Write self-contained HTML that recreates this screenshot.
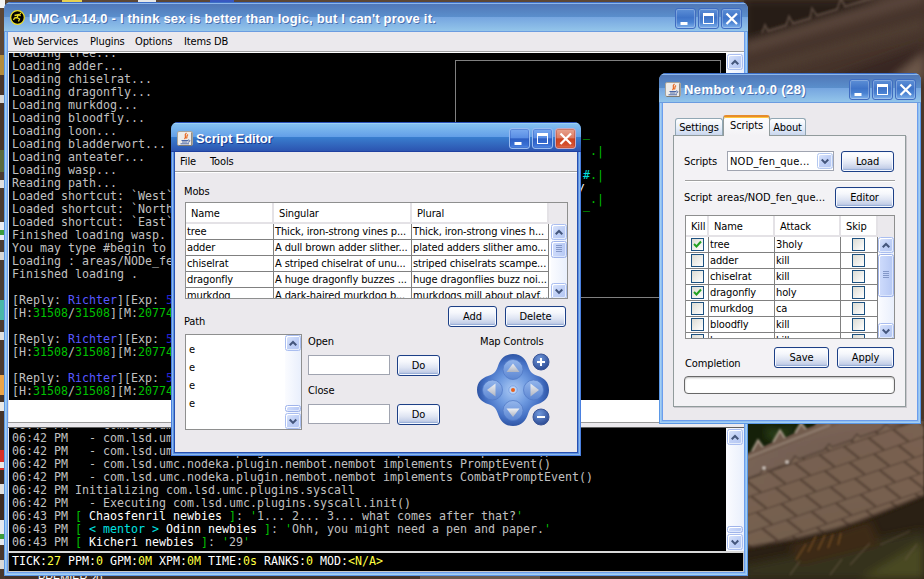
<!DOCTYPE html><html><head><meta charset="utf-8"><title>UMC</title><style>
*{box-sizing:border-box;margin:0;padding:0}
html,body{width:924px;height:579px;overflow:hidden;background:#4a3a30}
body{position:relative;font-family:"DejaVu Sans Condensed","Liberation Sans",sans-serif;font-size:11px;color:#000;line-height:13px;letter-spacing:-0.12px}
.abs{position:absolute}
.mono{font-family:"DejaVu Sans Mono","Liberation Mono",monospace;font-size:11.63px;line-height:13px;white-space:pre;color:#c0c0c0;letter-spacing:0}
.con{position:absolute;background:#000;overflow:hidden}
.con div{position:absolute;left:0;height:13px}
.g{color:#00c000}.b{color:#5858ff}.db{color:#2424d0}.w{color:#fff}.c{color:#00e0e0}.y{color:#ffff40}
/* windows */
.win{position:absolute;border-radius:7px 7px 0 0;overflow:hidden}
.win.in{background:#8fc0f0}
.win.in .fr{box-shadow:inset 0 0 0 1px #5b98e6,inset 0 0 0 2px #a4cdf3,inset 0 0 0 3px #8fc0f0,inset 0 0 0 4px #6c9ded}
.win.ac{background:#5a90e0}
.win.ac .fr{box-shadow:inset 0 0 0 1px #4a80e0,inset 0 0 0 2px #8cb8ec,inset 0 0 0 3px #5a90e0,inset 0 0 0 4px #2850b0}
.fr{position:absolute;left:0;right:0;top:26px;bottom:0}
.tb{position:absolute;left:0;right:0;top:0;height:30px}
.in .tb{background:linear-gradient(#3d6fc8 0,#3d6fc8 1px,#8cb6ea 1px,#8cb6ea 2px,#5077b7 2px,#5b90cd 15.5px,#76a6e0 15.5px,#93c5ea 29px,#6b9ce0 29px)}
.ac .tb{background:linear-gradient(#2850b8 0,#2850b8 1px,#9cd0f4 1px,#9cd0f4 2px,#84c0f0 2px,#64a0e8 14.5px,#3a80d0 14.5px,#2c54b0 29px,#1f40a0 29px)}
.tt{position:absolute;top:9px;color:#fff;font-family:"Liberation Sans",sans-serif;font-weight:bold;font-size:13px;line-height:16px;white-space:pre}
.ac .tt{text-shadow:1px 1px 0 #1a3a90}
.in .tt{text-shadow:1px 1px 0 #4a70b0}
.cb{position:absolute;top:6px;width:21px;height:21px;border-radius:3px;border:1px solid #3f6cc0}
.in .cb{background:linear-gradient(#5d8fd6,#3f74c8 45%,#4a82d2 70%,#7fb0ea);box-shadow:inset 0 0 0 1px rgba(255,255,255,.25)}
.ac .cb{background:linear-gradient(#7aaaf0 0,#5a8ee4 46%,#2d5fc4 52%,#3a70d4 85%,#5a90e8 100%);border-color:#9abcf0;box-shadow:inset 0 0 0 1px rgba(40,80,180,.35)}
.ac .cb.x{background:linear-gradient(#e8a490 0,#dc7c64 46%,#cc4420 52%,#d45030 85%,#e87858 100%);border-color:#c8a8c0;box-shadow:inset 0 0 0 1px rgba(160,50,30,.35)}
.cb svg{position:absolute;left:0;top:0}
.body{position:absolute;background:#ebe9ed}
.menu{position:absolute;left:0;right:0;top:0;height:19px;background:#ebe9ed}
.menu span{position:absolute;top:3px;white-space:pre}
.lbl{position:absolute;white-space:pre;line-height:13px}
/* buttons */
.btn{position:absolute;height:21px;border:1px solid #1c3f86;border-radius:3px;background:linear-gradient(#ffffff 0,#f5f7fc 30%,#dfe5f3 60%,#c4cfe8 85%,#aebcde 100%);box-shadow:inset 0 0 0 1px #f6f9ff, inset 0 -2px 1px #98aed8;text-align:center;line-height:19px;white-space:pre}
/* scrollbars */
.sb{position:absolute;background:linear-gradient(90deg,#fbfcff,#e9effc)}
.sbb{position:absolute;border:1px solid #aabef0;border-radius:2.5px;background:linear-gradient(135deg,#dce6fc,#c0d0f6 50%,#b4c6f2);box-shadow:inset 1px 1px 0 #fff,inset -1px -1px 0 #e4ecfc}
.sbb svg{position:absolute;left:0;top:0}
.sbt{position:absolute;border:1px solid #a0b4ea;border-radius:2.5px;background:linear-gradient(90deg,#cfdcfc,#b6c8f4);box-shadow:inset 1px 1px 0 #fff,inset -1px -1px 0 #dce6fc}
/* tables */
.tbl{position:absolute;background:#fff;border:1px solid #8e8f8f;overflow:hidden}
.th{position:absolute;top:0;height:21px;background:#fff;border-right:2px solid #e4e2e6;border-bottom:2px solid #e4e2e6;line-height:21px;padding-left:5px;white-space:pre}
.tr{position:absolute;left:0;height:16px}
.td{position:absolute;top:0;height:16px;border-right:1px solid #808080;border-bottom:1px solid #808080;line-height:16px;padding-left:1px;white-space:pre;overflow:hidden}
.chk{position:absolute;width:13px;height:13px;border:1px solid #1c5180;background:linear-gradient(135deg,#dcdcd4,#fff)}
.chk svg{position:absolute;left:0;top:0}
.fld{position:absolute;background:#fff;border:1px solid #a0a4b0}
</style></head><body>
<svg class="abs" style="left:0;top:0" width="924" height="579" viewBox="0 0 924 579">
<defs>
<linearGradient id="tail" x1="0" y1="0" x2="0.25" y2="1"><stop offset="0" stop-color="#8a7464"/><stop offset="0.25" stop-color="#705a4c"/><stop offset="0.7" stop-color="#66503f"/><stop offset="1" stop-color="#4a3a2a"/></linearGradient>
<linearGradient id="tr" x1="0" y1="0" x2="1" y2="0"><stop offset="0" stop-color="#000" stop-opacity="0"/><stop offset="1" stop-color="#8a4a30" stop-opacity=".3"/></linearGradient>
<pattern id="sc" width="26" height="17" patternUnits="userSpaceOnUse" patternTransform="translate(744 480) rotate(-19)"><rect width="26" height="17" fill="#86705f" opacity=".35"/><path d="M0 0H26M1 0L12 17M14 -17L26 0" stroke="#3a2a20" stroke-width="2.200" fill="none" opacity=".6"/></pattern>
<filter id="bl" x="-5%" y="-5%" width="110%" height="110%"><feGaussianBlur stdDeviation="1.2"/></filter>
<filter id="bl3" x="-10%" y="-10%" width="120%" height="120%"><feGaussianBlur stdDeviation="4"/></filter>
</defs>
<rect width="924" height="579" fill="#4a362a"/>
<!-- left strip icons -->
<g>
<rect x="0" y="0" width="5" height="8" fill="#f4f4f4"/><rect x="0" y="8" width="5" height="47" fill="#5c4636"/><rect x="0" y="55" width="5" height="20" fill="#b48c3c"/>
<rect x="0" y="75" width="5" height="75" fill="#49352a"/><rect x="0" y="95" width="4" height="8" fill="#d8d8d8"/><rect x="0" y="150" width="5" height="22" fill="#5a6a3c"/>
<rect x="0" y="172" width="5" height="50" fill="#4a3a30"/><rect x="0" y="180" width="4" height="8" fill="#e0e0e0"/><rect x="0" y="222" width="5" height="18" fill="#e8ecf4"/><rect x="0" y="230" width="5" height="5" fill="#3c9c3c"/>
<rect x="0" y="240" width="5" height="60" fill="#4a3c34"/><rect x="0" y="252" width="4" height="8" fill="#d8d8d8"/><rect x="0" y="300" width="5" height="20" fill="#48b8a8"/>
<rect x="0" y="320" width="5" height="55" fill="#4c3a30"/><rect x="0" y="332" width="4" height="8" fill="#e0e0e0"/><rect x="0" y="375" width="5" height="20" fill="#eca448"/>
<rect x="0" y="395" width="5" height="55" fill="#46342a"/><rect x="0" y="402" width="4" height="9" fill="#e8e8e8"/><rect x="0" y="450" width="5" height="20" fill="#d83028"/><rect x="0" y="462" width="5" height="6" fill="#e8e8e8"/>
<rect x="0" y="470" width="5" height="50" fill="#3c2a22"/><rect x="0" y="484" width="4" height="10" fill="#e0e0e0"/><rect x="0" y="520" width="5" height="25" fill="#e4e8f0"/><rect x="0" y="534" width="5" height="5" fill="#3c9c3c"/>
<rect x="0" y="545" width="5" height="34" fill="#48362c"/><rect x="0" y="560" width="4" height="9" fill="#d8d8d8"/>
</g>
<!-- top strip -->
<rect x="5" y="0" width="739" height="3" fill="#5c4634"/><rect x="744" y="0" width="180" height="3" fill="#2c1e18"/><rect x="62" y="0" width="20" height="2" fill="#e8d050"/><rect x="138" y="0" width="18" height="2" fill="#e8e8e8"/><rect x="210" y="0" width="24" height="2" fill="#3858c0"/>
<!-- top right dragon wing -->
<g>
<rect x="744" y="0" width="180" height="80" fill="#46342b"/>
<g filter="url(#bl3)">
<path d="M744 0H884L744 44Z" fill="#281b16"/>
<path d="M744 42L924 -12V2L744 54Z" fill="#58443a"/>
<path d="M744 70L924 18V30L744 80Z" fill="#503d33"/>
<path d="M820 80L924 44V80Z" fill="#382821"/>
<path d="M890 80L924 52V80Z" fill="#6c5648"/>
</g>
<path d="M762 33l3-8 3 6 18-5.500 3-9 4 7 17-5 2-10 5 7 20-6 4-11 4 8 30-9" stroke="#7a665a" stroke-width="2" fill="none" opacity=".55" filter="url(#bl)"/>
</g>
<!-- bottom right: tail -->
<g>
<rect x="744" y="420" width="180" height="159" fill="#2a2014"/>
<g filter="url(#bl3)">
<path d="M744 565L924 530V579H744Z" fill="#35301a"/>
<path d="M860 579L924 540V579Z" fill="#4a4a24"/>
<path d="M790 545L870 520L880 545L800 565Z" fill="#3c2a18"/>
</g>
<path d="M744 420H826L744 455Z" fill="#152009"/>
<path d="M765 428l18 3 12-7-8 12-18 4Z" fill="#2e441a" filter="url(#bl3)"/>
<g filter="url(#bl)">
<path d="M744 455 L752 451 L758 440 L763 447 L773 442 L780 430 L785 438 L795 433 L801 423 L806 429 L814 426 L819 420 L924 420 L924 496 L914 500 L887 511 L859 522 L835 530 L799 539 L744 549Z" fill="url(#tail)"/>
<path d="M744 455 L752 451 L758 440 L763 447 L773 442 L780 430 L785 438 L795 433 L801 423 L806 429 L814 426 L819 420 L924 420 L924 496 L914 500 L887 511 L859 522 L835 530 L799 539 L744 549Z" fill="url(#tr)"/>
<path d="M752 451L758 440L763 447M773 442L780 430L785 438M795 433L801 423L806 429" stroke="#c4b4a4" stroke-width="1.600" fill="none" opacity=".8"/><path d="M744 459L830 425" stroke="#b4a496" stroke-width="2.500" opacity=".45"/>
<path d="M744 462L840 424H900L744 482Z" fill="#8a7668" opacity=".4"/>
<path d="M744 480 L760 474 L764 468 L768 471 L790 463 L795 456 L799 459 L824 450 L829 444 L832 447 L852 440 L857 434 L860 437 L880 430 L886 424 L890 427 L924 420 L924 496 L914 500 L887 511 L859 522 L835 530 L799 539 L744 549Z" fill="#725c4c" opacity=".75"/>
<path d="M744 480 L760 474 L764 468 L768 471 L790 463 L795 456 L799 459 L824 450 L829 444 L832 447 L852 440 L857 434 L860 437 L880 430 L886 424 L890 427 L924 420 L924 496 L914 500 L887 511 L859 522 L835 530 L799 539 L744 549Z" fill="url(#sc)"/>
<path d="M744 480 L760 474 L764 468 L768 471 L790 463 L795 456 L799 459 L824 450 L829 444 L832 447 L852 440 L857 434 L860 437 L880 430 L886 424 L890 427 L924 420" stroke="#3e2e26" stroke-width="1.500" fill="none" opacity=".6"/>
<path d="M744 549L799 539L835 530L859 522L887 511L914 500L924 496" stroke="#33261c" stroke-width="5" fill="none" opacity=".5"/>
<circle cx="764" cy="468" r="1.500" fill="#e8e0d8"/><circle cx="787" cy="462" r="1.500" fill="#e8e0d8"/>
</g>
<g stroke="#8a5a28" stroke-width="1.400" opacity=".75" filter="url(#bl)"><path d="M808 552l8-16M818 550l7-15M828 548l5-14M838 545l3-12M796 560l10-16"/></g>
<g stroke="#6a5a48" stroke-width="1.300" opacity=".6" filter="url(#bl)"><path d="M850 565l20-22M880 545l30-14M790 575l10-14M905 560l12-16M830 575l12-16"/></g>
</g>
<!-- bottom strip -->
<rect x="5" y="575" width="743" height="4" fill="#42302a"/>
<rect x="420" y="575" width="120" height="4" fill="#6a5a50"/>
<text x="38" y="582" font-family="Liberation Sans, sans-serif" font-size="11" fill="#fff">PREMIER 20</text>
</svg>
<div class="win in" style="left:4px;top:2px;width:744px;height:574px">
<div class="fr"></div><div class="tb"></div>
<svg class="abs" style="left:6px;top:8px" width="16" height="16" viewBox="0 0 16 16"><circle cx="7.500" cy="7.500" r="6.800" fill="#000" stroke="#f0e020" stroke-width="1.200"/><path d="M4.500 5.500L9 4.500L10.500 6M8.500 5L7 7.500L9.500 9L8.500 11.500M7 7.500L4.500 8L3.500 10M10 4L11 3" stroke="#f0e020" stroke-width="1.300" fill="none"/></svg>
<div class="tt" style="left:25px;letter-spacing:.2px">UMC v1.14.0 - I think sex is better than logic, but I can't prove it.</div>
<div class="cb min" style="left:671px"><svg width="19" height="19" viewBox="0 0 19 19"><rect x="4.5" y="13" width="7" height="3" fill="#fff"/></svg></div><div class="cb max" style="left:694px"><svg width="19" height="19" viewBox="0 0 19 19"><rect x="4.5" y="5.5" width="10" height="9" fill="none" stroke="#fff" stroke-width="1"/><rect x="4" y="4" width="11" height="3" fill="#fff"/></svg></div><div class="cb x" style="left:717px"><svg width="19" height="19" viewBox="0 0 19 19"><path d="M4.5 4.500L15 15M15 4.500L4.5 15" stroke="#fff" stroke-width="2.200" fill="none"/></svg></div>
<div class="body" style="left:4px;top:30px;width:736px;height:540px">
<div class="menu">
<span style="left:5px">Web Services</span>
<span style="left:82px">Plugins</span>
<span style="left:127px">Options</span>
<span style="left:176px">Items DB</span>
</div>
<div class="abs" style="left:0;top:19px;width:736px;height:1px;background:#a0a0a0"></div>
<div class="abs" style="left:0;top:20px;width:736px;height:1px;background:#fff"></div>
<div class="con mono" style="left:1px;top:21px;width:717px;height:347px">
<div style="top:-6px;left:3px">Loading tree...</div>
<div style="top:7px;left:3px">Loading adder...</div>
<div style="top:20px;left:3px">Loading chiselrat...</div>
<div style="top:33px;left:3px">Loading dragonfly...</div>
<div style="top:46px;left:3px">Loading murkdog...</div>
<div style="top:59px;left:3px">Loading bloodfly...</div>
<div style="top:72px;left:3px">Loading loon...</div>
<div style="top:85px;left:3px">Loading bladderwort...</div>
<div style="top:98px;left:3px">Loading anteater...</div>
<div style="top:111px;left:3px">Loading wasp...</div>
<div style="top:124px;left:3px">Reading path...</div>
<div style="top:137px;left:3px">Loaded shortcut: `West`</div>
<div style="top:150px;left:3px">Loaded shortcut: `North`</div>
<div style="top:163px;left:3px">Loaded shortcut: `East`</div>
<div style="top:176px;left:3px">Finished loading wasp.</div>
<div style="top:189px;left:3px">You may type #begin to start</div>
<div style="top:202px;left:3px">Loading : areas/NODe_fen</div>
<div style="top:215px;left:3px">Finished loading .</div>
<div style="top:241px;left:3px">[Reply: <span class="b">Richter</span>][Exp: <span class="db">5</span></div>
<div style="top:254px;left:3px">[H:<span class="g">31508</span>/<span class="g">31508</span>][M:<span class="g">20774</span></div>
<div style="top:280px;left:3px">[Reply: <span class="b">Richter</span>][Exp: <span class="db">5</span></div>
<div style="top:293px;left:3px">[H:<span class="g">31508</span>/<span class="g">31508</span>][M:<span class="g">20774</span></div>
<div style="top:319px;left:3px">[Reply: <span class="b">Richter</span>][Exp: <span class="db">5</span></div>
<div style="top:332px;left:3px">[H:<span class="g">31508</span>/<span class="g">31508</span>][M:<span class="g">20774</span></div>
<div class="abs" style="left:446px;top:7px;width:266px;height:238px;border:1px solid #808080;height:238px"></div>
<div class="g" style="left:574px;top:74px">_</div>
<div class="g" style="left:581px;top:92px">.|</div>
<div class="c" style="left:574px;top:116px">#</div>
<div class="g" style="left:581px;top:116px">.|</div>
<div class="w" style="left:569px;top:130px">/</div>
<div class="g" style="left:581px;top:140px">.|</div>
<div class="g" style="left:574px;top:146px">_</div>
</div>
<div class="sb" style="left:718px;top:21px;width:18px;height:347px"><div class="sbb" style="top:1px;left:1px;width:16px;height:16px"><svg width="14" height="14" viewBox="0 0 15 15"><path d="M4 10L7.5 6.5L11 10" stroke="#44567c" stroke-width="2.2" fill="none"/></svg></div><div class="sbb" style="top:330px;left:1px;width:16px;height:16px"><svg width="14" height="14" viewBox="0 0 15 15"><path d="M4 6L7.5 9.5L11 6" stroke="#44567c" stroke-width="2.2" fill="none"/></svg></div></div>
<div class="abs" style="left:1px;top:368px;width:735px;height:22px;background:#fff"></div>
<div class="abs" style="left:0px;top:390px;width:736px;height:1px;background:#9a9a9a"></div>
<div class="abs" style="left:0px;top:395px;width:736px;height:1px;background:#606060"></div>
<div class="con mono" style="left:1px;top:396px;width:717px;height:123px">
<div style="top:-9px;left:3px">06:42 PM   - com.lsd.umc.nodeka.plugin.nembot.nembot implements ConnectEvent()</div>
<div style="top:4px;left:3px">06:42 PM   - com.lsd.umc.nodeka.plugin.nembot.nembot implements InputEvent()</div>
<div style="top:17px;left:3px">06:42 PM   - com.lsd.umc.nodeka.plugin.nembot.nembot implements OutputEvent()</div>
<div style="top:30px;left:3px">06:42 PM   - com.lsd.umc.nodeka.plugin.nembot.nembot implements PromptEvent()</div>
<div style="top:43px;left:3px">06:42 PM   - com.lsd.umc.nodeka.plugin.nembot.nembot implements CombatPromptEvent()</div>
<div style="top:56px;left:3px">06:42 PM Initializing com.lsd.umc.plugins.syscall</div>
<div style="top:69px;left:3px">06:42 PM   - Executing com.lsd.umc.plugins.syscall.init()</div>
<div style="top:82px;left:3px">06:43 PM <span class="g">[</span><span class="w"> Chaosfenril newbies </span><span class="g">]</span>: <span class="g">'</span>1... 2... 3... what comes after that?<span class="g">'</span></div>
<div style="top:95px;left:3px">06:43 PM <span class="g">[</span><span class="c"> &lt; mentor &gt;</span><span class="w"> Odinn newbies </span><span class="g">]</span>: <span class="g">'</span>Ohh, you might need a pen and paper.<span class="g">'</span></div>
<div style="top:108px;left:3px">06:43 PM <span class="g">[</span><span class="w"> Kicheri newbies </span><span class="g">]</span>: <span class="g">'</span>29<span class="g">'</span></div>
</div>
<div class="sb" style="left:718px;top:396px;width:18px;height:123px"><div class="sbb" style="top:1px;left:1px;width:16px;height:16px"><svg width="14" height="14" viewBox="0 0 15 15"><path d="M4 10L7.5 6.5L11 10" stroke="#44567c" stroke-width="2.2" fill="none"/></svg></div><div class="sbt" style="top:98px;left:1px;height:7px;width:16px"></div><div class="sbb" style="top:106px;left:1px;width:16px;height:16px"><svg width="14" height="14" viewBox="0 0 15 15"><path d="M4 6L7.5 9.5L11 6" stroke="#44567c" stroke-width="2.2" fill="none"/></svg></div></div>
<div class="abs" style="left:0;top:519px;width:736px;height:2px;background:#d8d8d8"></div>
<div class="con mono" style="left:0px;top:521px;width:736px;height:19px;border-left:1px solid #a0a0a0;border-right:1px solid #c0c0c0;border-bottom:1px solid #c8c8c8">
<div style="top:2px;left:3px"><span class="w">TICK:</span><span class="y">27</span><span class="w"> PPM:</span><span class="y">0</span><span class="w"> GPM:</span><span class="y">0M</span><span class="w"> XPM:</span><span class="y">0M</span><span class="w"> TIME:</span><span class="y">0s</span><span class="w"> RANKS:</span><span class="y">0</span><span class="w"> MOD:</span><span class="y">&lt;N/A&gt;</span></div>
</div>
</div>
</div>
<div class="win ac" style="left:171px;top:122px;width:410px;height:334px">
<div class="fr"></div><div class="tb"></div>
<svg class="abs" style="left:6px;top:9px" width="16" height="15" viewBox="0 0 16 15"><rect x=".5" y=".5" width="15" height="14" rx="1.5" fill="#efece8" stroke="#a8a49c"/><path d="M1.500 14.500H14.500V1.500" stroke="#6c6860" stroke-width="1" fill="none" opacity=".7"/><path d="M9.500 2C6 4.500 10.500 5 7.500 8M11 3.500C9 5 10.500 6 9.500 7.500" stroke="#e8651c" stroke-width="1.200" fill="none"/><path d="M4.500 9.500H11M5 11H10.500M3.500 12.800H12" stroke="#4a68a8" stroke-width="1"/><path d="M11 9c2.500-.5 2.500 2 0 2.200" stroke="#4a68a8" stroke-width="1" fill="none"/></svg>
<div class="tt" style="left:25px">Script Editor</div>
<div class="cb min" style="left:338px"><svg width="19" height="19" viewBox="0 0 19 19"><rect x="4.5" y="13" width="7" height="3" fill="#fff"/></svg></div><div class="cb max" style="left:361px"><svg width="19" height="19" viewBox="0 0 19 19"><rect x="4.5" y="5.5" width="10" height="9" fill="none" stroke="#fff" stroke-width="1"/><rect x="4" y="4" width="11" height="3" fill="#fff"/></svg></div><div class="cb x" style="left:384px"><svg width="19" height="19" viewBox="0 0 19 19"><path d="M4.5 4.500L15 15M15 4.500L4.5 15" stroke="#fff" stroke-width="2.200" fill="none"/></svg></div>
<div class="body" style="left:4px;top:30px;width:402px;height:300px">
<div class="menu"><span style="left:5px">File</span><span style="left:35px">Tools</span></div>
<div class="abs" style="left:0;top:19px;width:402px;height:1px;background:#a0a0a0"></div>
<div class="abs" style="left:0;top:20px;width:402px;height:1px;background:#fff"></div>
<div class="lbl" style="left:9px;top:33px;">Mobs</div>
<div class="tbl" style="left:10px;top:50px;width:383px;height:97px">
<div class="th" style="left:0px;width:88px">Name</div>
<div class="th" style="left:88px;width:138px">Singular</div>
<div class="th" style="left:226px;width:137px">Plural</div>
<div class="abs" style="left:363px;top:0;width:20px;height:21px;background:#ebe9ed"></div>
<div class="tr" style="top:21px">
<div class="td" style="left:0px;width:88px">tree</div>
<div class="td" style="left:88px;width:138px">Thick, iron-strong vines p...</div>
<div class="td" style="left:226px;width:137px">Thick, iron-strong vines h...</div>
</div>
<div class="tr" style="top:37px">
<div class="td" style="left:0px;width:88px">adder</div>
<div class="td" style="left:88px;width:138px">A dull brown adder slither...</div>
<div class="td" style="left:226px;width:137px">plated adders slither amo...</div>
</div>
<div class="tr" style="top:53px">
<div class="td" style="left:0px;width:88px">chiselrat</div>
<div class="td" style="left:88px;width:138px">A striped chiselrat of unu...</div>
<div class="td" style="left:226px;width:137px">striped chiselrats scampe...</div>
</div>
<div class="tr" style="top:69px">
<div class="td" style="left:0px;width:88px">dragonfly</div>
<div class="td" style="left:88px;width:138px">A huge dragonfly buzzes ...</div>
<div class="td" style="left:226px;width:137px">huge dragonflies buzz noi...</div>
</div>
<div class="tr" style="top:85px">
<div class="td" style="left:0px;width:88px">murkdog</div>
<div class="td" style="left:88px;width:138px">A dark-haired murkdog b...</div>
<div class="td" style="left:226px;width:137px">murkdogs mill about playf...</div>
</div>
<div class="sb" style="left:365px;top:21px;width:16px;height:75px"><div class="sbb" style="top:0px;left:0px;width:16px;height:16px"><svg width="14" height="14" viewBox="0 0 15 15"><path d="M4 10L7.5 6.5L11 10" stroke="#44567c" stroke-width="2.2" fill="none"/></svg></div><div class="sbt" style="top:17px;left:0px;height:17px;width:16px"><i style="position:absolute;left:4px;top:3px;width:6px;height:1px;background:#8498c8"></i><i style="position:absolute;left:4px;top:5px;width:6px;height:1px;background:#8498c8"></i><i style="position:absolute;left:4px;top:7px;width:6px;height:1px;background:#8498c8"></i><i style="position:absolute;left:4px;top:9px;width:6px;height:1px;background:#8498c8"></i></div><div class="sbb" style="top:59px;left:0px;width:16px;height:16px"><svg width="14" height="14" viewBox="0 0 15 15"><path d="M4 6L7.5 9.5L11 6" stroke="#44567c" stroke-width="2.2" fill="none"/></svg></div></div>
</div>
<div class="btn" style="left:273px;top:154px;width:49px">Add</div>
<div class="btn" style="left:330px;top:154px;width:61px">Delete</div>
<div class="lbl" style="left:9px;top:163px;">Path</div>
<div class="tbl" style="left:10px;top:182px;width:117px;height:96px;border-color:#8e8f8f">
<div class="lbl" style="left:3px;top:8px">e</div>
<div class="lbl" style="left:3px;top:26px">e</div>
<div class="lbl" style="left:3px;top:44px">e</div>
<div class="lbl" style="left:3px;top:62px">e</div>
<div class="sb" style="left:99px;top:0px;width:16px;height:94px"><div class="sbb" style="top:0px;left:0px;width:16px;height:16px"><svg width="14" height="14" viewBox="0 0 15 15"><path d="M4 10L7.5 6.5L11 10" stroke="#44567c" stroke-width="2.2" fill="none"/></svg></div><div class="sbt" style="top:70px;left:0px;height:7px;width:16px"></div><div class="sbb" style="top:78px;left:0px;width:16px;height:16px"><svg width="14" height="14" viewBox="0 0 15 15"><path d="M4 6L7.5 9.5L11 6" stroke="#44567c" stroke-width="2.2" fill="none"/></svg></div></div>
</div>
<div class="lbl" style="left:133px;top:183px;">Open</div>
<div class="fld" style="left:133px;top:203px;width:82px;height:20px"></div>
<div class="btn" style="left:222px;top:203px;width:43px">Do</div>
<div class="lbl" style="left:133px;top:232px;">Close</div>
<div class="fld" style="left:133px;top:252px;width:82px;height:20px"></div>
<div class="btn" style="left:222px;top:252px;width:43px">Do</div>
<div class="lbl" style="left:305px;top:183px;">Map Controls</div>
<svg class="abs" style="left:301px;top:200px" width="76" height="76" viewBox="0 0 76 76">
<defs><radialGradient id="mc" cx=".5" cy=".5" r=".5"><stop offset="0" stop-color="#accaf4"/><stop offset=".45" stop-color="#6e9ae0"/><stop offset=".8" stop-color="#4470c4"/><stop offset="1" stop-color="#2f55a4"/></radialGradient>
<radialGradient id="pb" cx=".4" cy=".3" r=".75"><stop offset="0" stop-color="#7098dc"/><stop offset="1" stop-color="#28468f"/></radialGradient>
<linearGradient id="ic" x1="0" y1="0" x2="0" y2="1"><stop offset="0" stop-color="#94b6ec"/><stop offset="1" stop-color="#5c86d2"/></linearGradient>
<linearGradient id="ar" x1="0" y1="0" x2="0" y2="1"><stop offset="0" stop-color="#eef0f4"/><stop offset="1" stop-color="#aeb4c2"/></linearGradient></defs>
<path d="M37 2 C46 2 50 8 52 14 C54 20 56 22 62 24 C68 26 73 30 73 38 C73 46 68 50 62 52 C56 54 54 56 52 62 C50 68 46 74 37 74 C28 74 24 68 22 62 C20 56 18 54 12 52 C6 50 1 46 1 38 C1 30 6 26 12 24 C18 22 20 20 22 14 C24 8 28 2 37 2Z" fill="url(#mc)"/>
<g fill="url(#ic)" stroke="#5078c4" stroke-width="1" stroke-opacity=".7"><circle cx="37" cy="17.500" r="10"/><circle cx="37" cy="58.500" r="10"/><circle cx="16.500" cy="38" r="10"/><circle cx="57.500" cy="38" r="10"/></g>
<g fill="url(#ar)"><path d="M37 11.500L43.500 20H30.500Z"/><path d="M37 65L43.500 56.500H30.500Z"/><path d="M11 38L19.500 31.500V44.500Z"/><path d="M63 38L54.500 31.500V44.500Z"/></g>
<circle cx="37" cy="38" r="4.200" fill="#bcd4f6" stroke="#7ca2e4"/><circle cx="37" cy="38" r="2" fill="#e8601c"/>
<circle cx="65" cy="10" r="8" fill="url(#pb)" stroke="#3a5698"/><path d="M61 10H69M65 6V14" stroke="#fff" stroke-width="2"/>
<circle cx="65" cy="65" r="8" fill="url(#pb)" stroke="#3a5698"/><path d="M61 65H69" stroke="#fff" stroke-width="2"/>
</svg>
</div></div>
<div class="win in" style="left:659px;top:73px;width:262px;height:351px">
<div class="fr"></div><div class="tb"></div>
<svg class="abs" style="left:6px;top:9px" width="16" height="15" viewBox="0 0 16 15"><rect x=".5" y=".5" width="15" height="14" rx="1.5" fill="#efece8" stroke="#a8a49c"/><path d="M1.500 14.500H14.500V1.500" stroke="#6c6860" stroke-width="1" fill="none" opacity=".7"/><path d="M9.500 2C6 4.500 10.500 5 7.500 8M11 3.500C9 5 10.500 6 9.500 7.500" stroke="#e8651c" stroke-width="1.200" fill="none"/><path d="M4.500 9.500H11M5 11H10.500M3.500 12.800H12" stroke="#4a68a8" stroke-width="1"/><path d="M11 9c2.500-.5 2.500 2 0 2.200" stroke="#4a68a8" stroke-width="1" fill="none"/></svg>
<div class="tt" style="left:25px;letter-spacing:.4px">Nembot v1.0.0 (28)</div>
<div class="cb min" style="left:190px"><svg width="19" height="19" viewBox="0 0 19 19"><rect x="4.5" y="13" width="7" height="3" fill="#fff"/></svg></div><div class="cb max" style="left:213px"><svg width="19" height="19" viewBox="0 0 19 19"><rect x="4.5" y="5.5" width="10" height="9" fill="none" stroke="#fff" stroke-width="1"/><rect x="4" y="4" width="11" height="3" fill="#fff"/></svg></div><div class="cb x" style="left:236px"><svg width="19" height="19" viewBox="0 0 19 19"><path d="M4.5 4.500L15 15M15 4.500L4.5 15" stroke="#fff" stroke-width="2.200" fill="none"/></svg></div>
<div class="body" style="left:4px;top:30px;width:254px;height:317px">
<div class="abs" style="left:10px;top:32px;width:233px;height:272px;border:1px solid #919b9c;background:#f3f2f5;box-shadow:1px 1px 0 #c8c6cc"></div>
<div class="abs" style="left:12px;top:15px;width:48px;height:17px;border:1px solid #91a7b4;border-bottom:none;border-radius:3px 3px 0 0;background:linear-gradient(#fff,#e4ecf8 60%,#c8d6ee);text-align:center;line-height:17px">Settings</div>
<div class="abs" style="left:106px;top:15px;width:37px;height:17px;border:1px solid #91a7b4;border-bottom:none;border-radius:3px 3px 0 0;background:linear-gradient(#fff,#e4ecf8 60%,#c8d6ee);text-align:center;line-height:17px">About</div>
<div class="abs" style="left:60px;top:12px;width:47px;height:21px;border:1px solid #919b9c;border-bottom:none;border-radius:3px 3px 0 0;background:linear-gradient(#fdfdfe,#f3f2f5);text-align:center;line-height:17px;border-top:2px solid #e68b2c;box-shadow:inset 0 1px 0 #ffc73c">Scripts</div>
<div class="lbl" style="left:21px;top:52px;">Scripts</div>
<div class="fld" style="left:64px;top:48px;width:107px;height:20px"><div class="lbl" style="left:2px;top:3px;letter-spacing:.22px">NOD_fen_que...</div><div class="sbb" style="left:89px;top:1px;width:16px;height:16px;border-color:#b4c8f0"><svg width="14" height="14" viewBox="0 0 15 15"><path d="M4 6L7.5 9.5L11 6" stroke="#44567c" stroke-width="2.2" fill="none"/></svg></div></div>
<div class="btn" style="left:178px;top:48px;width:53px">Load</div>
<div class="abs" style="left:22px;top:77px;width:210px;height:1px;background:#a0a0a0"></div>
<div class="abs" style="left:22px;top:78px;width:210px;height:1px;background:#fff"></div>
<div class="lbl" style="left:21px;top:88px;">Script</div>
<div class="lbl" style="left:54px;top:88px;letter-spacing:.05px">areas/NOD_fen_que...</div>
<div class="btn" style="left:172px;top:84px;width:59px">Editor</div>
<div class="tbl" style="left:22px;top:112px;width:210px;height:124px">
<div class="th" style="left:0px;width:23px">Kill</div>
<div class="th" style="left:23px;width:66px">Name</div>
<div class="th" style="left:89px;width:66px">Attack</div>
<div class="th" style="left:155px;width:37px">Skip</div>
<div class="abs" style="left:192px;top:0;width:20px;height:21px;background:#ebe9ed"></div>
<div class="tr" style="top:21px">
<div class="td" style="left:0;width:23px"><div class="chk" style="left:5px;top:1px"><svg width="11" height="11" viewBox="0 0 11 11"><path d="M2 5L4.5 7.5L9 2.5" stroke="#21a121" stroke-width="2" fill="none"/></svg></div></div>
<div class="td" style="left:23px;width:66px">tree</div>
<div class="td" style="left:89px;width:66px">3holy</div>
<div class="td" style="left:155px;width:37px"><div class="chk" style="left:11px;top:1px"></div></div>
</div>
<div class="tr" style="top:37px">
<div class="td" style="left:0;width:23px"><div class="chk" style="left:5px;top:1px"></div></div>
<div class="td" style="left:23px;width:66px">adder</div>
<div class="td" style="left:89px;width:66px">kill</div>
<div class="td" style="left:155px;width:37px"><div class="chk" style="left:11px;top:1px"></div></div>
</div>
<div class="tr" style="top:53px">
<div class="td" style="left:0;width:23px"><div class="chk" style="left:5px;top:1px"></div></div>
<div class="td" style="left:23px;width:66px">chiselrat</div>
<div class="td" style="left:89px;width:66px">kill</div>
<div class="td" style="left:155px;width:37px"><div class="chk" style="left:11px;top:1px"></div></div>
</div>
<div class="tr" style="top:69px">
<div class="td" style="left:0;width:23px"><div class="chk" style="left:5px;top:1px"><svg width="11" height="11" viewBox="0 0 11 11"><path d="M2 5L4.5 7.5L9 2.5" stroke="#21a121" stroke-width="2" fill="none"/></svg></div></div>
<div class="td" style="left:23px;width:66px">dragonfly</div>
<div class="td" style="left:89px;width:66px">holy</div>
<div class="td" style="left:155px;width:37px"><div class="chk" style="left:11px;top:1px"></div></div>
</div>
<div class="tr" style="top:85px">
<div class="td" style="left:0;width:23px"><div class="chk" style="left:5px;top:1px"></div></div>
<div class="td" style="left:23px;width:66px">murkdog</div>
<div class="td" style="left:89px;width:66px">ca</div>
<div class="td" style="left:155px;width:37px"><div class="chk" style="left:11px;top:1px"></div></div>
</div>
<div class="tr" style="top:101px">
<div class="td" style="left:0;width:23px"><div class="chk" style="left:5px;top:1px"></div></div>
<div class="td" style="left:23px;width:66px">bloodfly</div>
<div class="td" style="left:89px;width:66px">kill</div>
<div class="td" style="left:155px;width:37px"><div class="chk" style="left:11px;top:1px"></div></div>
</div>
<div class="tr" style="top:117px">
<div class="td" style="left:0;width:23px"><div class="chk" style="left:5px;top:1px"></div></div>
<div class="td" style="left:23px;width:66px">loon</div>
<div class="td" style="left:89px;width:66px">kill</div>
<div class="td" style="left:155px;width:37px"><div class="chk" style="left:11px;top:1px"></div></div>
</div>
<div class="sb" style="left:192px;top:21px;width:16px;height:102px"><div class="sbb" style="top:0px;left:0px;width:16px;height:16px"><svg width="14" height="14" viewBox="0 0 15 15"><path d="M4 10L7.5 6.5L11 10" stroke="#44567c" stroke-width="2.2" fill="none"/></svg></div><div class="sbt" style="top:17px;left:0px;height:43px;width:16px"><i style="position:absolute;left:4px;top:16px;width:6px;height:1px;background:#8498c8"></i><i style="position:absolute;left:4px;top:18px;width:6px;height:1px;background:#8498c8"></i><i style="position:absolute;left:4px;top:20px;width:6px;height:1px;background:#8498c8"></i><i style="position:absolute;left:4px;top:22px;width:6px;height:1px;background:#8498c8"></i></div><div class="sbb" style="top:86px;left:0px;width:16px;height:16px"><svg width="14" height="14" viewBox="0 0 15 15"><path d="M4 6L7.5 9.5L11 6" stroke="#44567c" stroke-width="2.2" fill="none"/></svg></div></div>
</div>
<div class="lbl" style="left:22px;top:254px;">Completion</div>
<div class="btn" style="left:111px;top:244px;width:55px">Save</div>
<div class="btn" style="left:174px;top:244px;width:57px">Apply</div>
<div class="abs" style="left:21px;top:273px;width:211px;height:18px;background:#fff;border:1px solid #686868;border-radius:4px;box-shadow:inset 0 1px 2px #bbb"></div>
</div></div>
</body></html>
